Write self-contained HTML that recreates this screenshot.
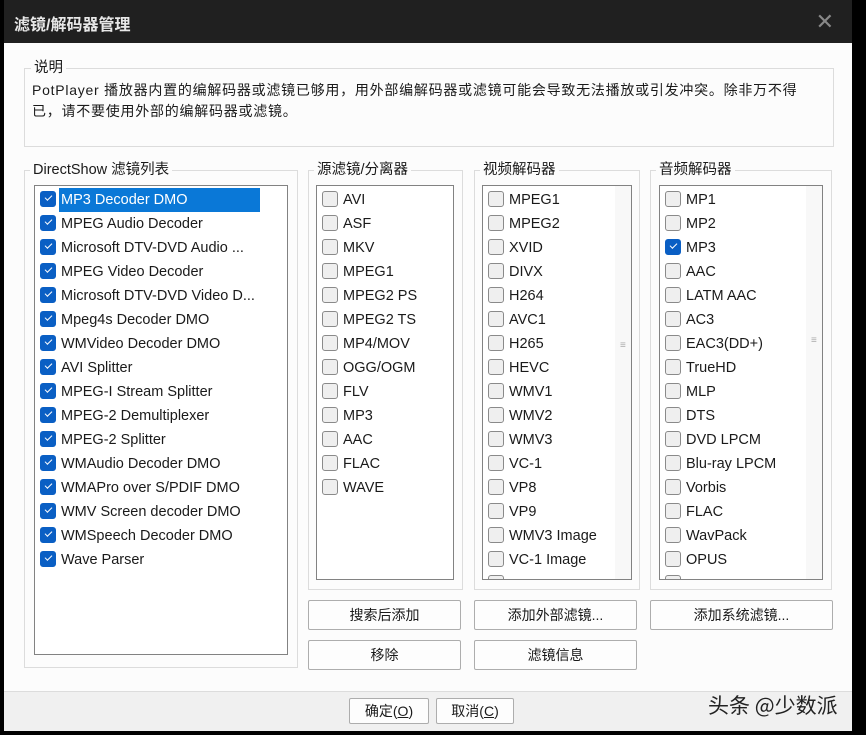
<!DOCTYPE html>
<html><head><meta charset="utf-8"><style>
*{box-sizing:border-box;margin:0;padding:0}
body{width:866px;height:735px;background:#000;position:relative;overflow:hidden;font-family:"Liberation Sans","Noto Sans CJK SC",sans-serif;font-size:14.5px;color:#1a1a1a}
.a{position:absolute}
#title{left:4px;top:0;width:848px;height:43px;background:#202020;color:#e8e8e8;font-size:16px;font-weight:bold;padding:11px 0 0 10px}
#x{right:18px;top:9px;color:#888;font-size:22px;font-weight:normal;position:absolute}
#body{left:4px;top:43px;width:848px;height:648px;background:#fcfcfc}
#foot{left:4px;top:691px;width:848px;height:40px;background:#f0f0f0;border-top:1px solid #dcdcdc}
.grp{border:1px solid #dcdcdc}
.lg{background:#fcfcfc;padding:0 3px;line-height:16px}
.lb{background:#fff;border:1px solid #828282;overflow:hidden}
.row{position:absolute;left:5px;height:24px;line-height:24px;white-space:nowrap}
.cb{display:inline-block;width:16px;height:16px;border:1px solid #8a8a8a;border-radius:3px;background:#efefef;vertical-align:middle;margin-top:-3px;margin-right:5px}
.ck{background:#0a5fc4;border-color:#0a5fc4;position:relative}
.ck:after{content:"";position:absolute;left:4px;top:3px;width:6px;height:3px;border-left:1.5px solid #fff;border-bottom:1.5px solid #fff;transform:rotate(-45deg)}
.sel{background:#0a78d7;color:#fff;padding:0 2px;margin-left:-2px;display:inline-block;width:201px}
.btn{background:#fdfdfd;border:1px solid #adadad;text-align:center;font-size:14px;border-radius:2px}
.sb{position:absolute;right:0;top:0;width:16px;height:100%;background:#f8f8f8}
</style></head><body>
<div id="title" class="a">滤镜/解码器管理<span id="x">✕</span></div>
<div id="body" class="a"></div>
<div id="foot" class="a"></div>

<div class="a grp" style="left:24px;top:68px;width:810px;height:79px"></div>
<div class="a lg" style="left:31px;top:60px">说明</div>
<div class="a" style="left:32px;top:80px;width:800px;line-height:21px;font-size:14px;white-space:nowrap;letter-spacing:0.75px">PotPlayer 播放器内置的编解码器或滤镜已够用，用外部编解码器或滤镜可能会导致无法播放或引发冲突。除非万不得<br>已，请不要使用外部的编解码器或滤镜。</div>

<div class="a grp" style="left:24px;top:170px;width:274px;height:498px"></div>
<div class="a lg" style="left:30px;top:162px">DirectShow 滤镜列表</div>
<div class="a lb" style="left:34px;top:185px;width:254px;height:470px">
<div class="row" style="top:2px"><span class="cb ck"></span><span class="sel">MP3 Decoder DMO</span></div>
<div class="row" style="top:26px"><span class="cb ck"></span>MPEG Audio Decoder</div>
<div class="row" style="top:50px"><span class="cb ck"></span>Microsoft DTV-DVD Audio ...</div>
<div class="row" style="top:74px"><span class="cb ck"></span>MPEG Video Decoder</div>
<div class="row" style="top:98px"><span class="cb ck"></span>Microsoft DTV-DVD Video D...</div>
<div class="row" style="top:122px"><span class="cb ck"></span>Mpeg4s Decoder DMO</div>
<div class="row" style="top:146px"><span class="cb ck"></span>WMVideo Decoder DMO</div>
<div class="row" style="top:170px"><span class="cb ck"></span>AVI Splitter</div>
<div class="row" style="top:194px"><span class="cb ck"></span>MPEG-I Stream Splitter</div>
<div class="row" style="top:218px"><span class="cb ck"></span>MPEG-2 Demultiplexer</div>
<div class="row" style="top:242px"><span class="cb ck"></span>MPEG-2 Splitter</div>
<div class="row" style="top:266px"><span class="cb ck"></span>WMAudio Decoder DMO</div>
<div class="row" style="top:290px"><span class="cb ck"></span>WMAPro over S/PDIF DMO</div>
<div class="row" style="top:314px"><span class="cb ck"></span>WMV Screen decoder DMO</div>
<div class="row" style="top:338px"><span class="cb ck"></span>WMSpeech Decoder DMO</div>
<div class="row" style="top:362px"><span class="cb ck"></span>Wave Parser</div>
</div>

<div class="a grp" style="left:308px;top:170px;width:155px;height:420px"></div>
<div class="a lg" style="left:314px;top:162px">源滤镜/分离器</div>
<div class="a lb" style="left:316px;top:185px;width:138px;height:395px">
<div class="row" style="top:2px"><span class="cb"></span>AVI</div>
<div class="row" style="top:26px"><span class="cb"></span>ASF</div>
<div class="row" style="top:50px"><span class="cb"></span>MKV</div>
<div class="row" style="top:74px"><span class="cb"></span>MPEG1</div>
<div class="row" style="top:98px"><span class="cb"></span>MPEG2 PS</div>
<div class="row" style="top:122px"><span class="cb"></span>MPEG2 TS</div>
<div class="row" style="top:146px"><span class="cb"></span>MP4/MOV</div>
<div class="row" style="top:170px"><span class="cb"></span>OGG/OGM</div>
<div class="row" style="top:194px"><span class="cb"></span>FLV</div>
<div class="row" style="top:218px"><span class="cb"></span>MP3</div>
<div class="row" style="top:242px"><span class="cb"></span>AAC</div>
<div class="row" style="top:266px"><span class="cb"></span>FLAC</div>
<div class="row" style="top:290px"><span class="cb"></span>WAVE</div>
</div>

<div class="a grp" style="left:474px;top:170px;width:166px;height:420px"></div>
<div class="a lg" style="left:480px;top:162px">视频解码器</div>
<div class="a lb" style="left:482px;top:185px;width:150px;height:395px">
<div class="row" style="top:2px"><span class="cb"></span>MPEG1</div>
<div class="row" style="top:26px"><span class="cb"></span>MPEG2</div>
<div class="row" style="top:50px"><span class="cb"></span>XVID</div>
<div class="row" style="top:74px"><span class="cb"></span>DIVX</div>
<div class="row" style="top:98px"><span class="cb"></span>H264</div>
<div class="row" style="top:122px"><span class="cb"></span>AVC1</div>
<div class="row" style="top:146px"><span class="cb"></span>H265</div>
<div class="row" style="top:170px"><span class="cb"></span>HEVC</div>
<div class="row" style="top:194px"><span class="cb"></span>WMV1</div>
<div class="row" style="top:218px"><span class="cb"></span>WMV2</div>
<div class="row" style="top:242px"><span class="cb"></span>WMV3</div>
<div class="row" style="top:266px"><span class="cb"></span>VC-1</div>
<div class="row" style="top:290px"><span class="cb"></span>VP8</div>
<div class="row" style="top:314px"><span class="cb"></span>VP9</div>
<div class="row" style="top:338px"><span class="cb"></span>WMV3 Image</div>
<div class="row" style="top:362px"><span class="cb"></span>VC-1 Image</div>
<div class="row" style="top:386px"><span class="cb"></span></div>
<div class="sb"><div style="position:absolute;left:5px;top:155px;color:#aaa;font-size:10px;line-height:10px">≡</div></div>
</div>

<div class="a grp" style="left:650px;top:170px;width:182px;height:420px"></div>
<div class="a lg" style="left:656px;top:162px">音频解码器</div>
<div class="a lb" style="left:659px;top:185px;width:164px;height:395px">
<div class="row" style="top:2px"><span class="cb"></span>MP1</div>
<div class="row" style="top:26px"><span class="cb"></span>MP2</div>
<div class="row" style="top:50px"><span class="cb ck"></span>MP3</div>
<div class="row" style="top:74px"><span class="cb"></span>AAC</div>
<div class="row" style="top:98px"><span class="cb"></span>LATM AAC</div>
<div class="row" style="top:122px"><span class="cb"></span>AC3</div>
<div class="row" style="top:146px"><span class="cb"></span>EAC3(DD+)</div>
<div class="row" style="top:170px"><span class="cb"></span>TrueHD</div>
<div class="row" style="top:194px"><span class="cb"></span>MLP</div>
<div class="row" style="top:218px"><span class="cb"></span>DTS</div>
<div class="row" style="top:242px"><span class="cb"></span>DVD LPCM</div>
<div class="row" style="top:266px"><span class="cb"></span>Blu-ray LPCM</div>
<div class="row" style="top:290px"><span class="cb"></span>Vorbis</div>
<div class="row" style="top:314px"><span class="cb"></span>FLAC</div>
<div class="row" style="top:338px"><span class="cb"></span>WavPack</div>
<div class="row" style="top:362px"><span class="cb"></span>OPUS</div>
<div class="row" style="top:386px"><span class="cb"></span></div>
<div class="sb"><div style="position:absolute;left:5px;top:150px;color:#aaa;font-size:10px;line-height:10px">≡</div></div>
</div>

<div class="a btn" style="left:308px;top:600px;width:153px;height:30px;line-height:28px">搜索后添加</div>
<div class="a btn" style="left:474px;top:600px;width:163px;height:30px;line-height:28px">添加外部滤镜...</div>
<div class="a btn" style="left:650px;top:600px;width:183px;height:30px;line-height:28px">添加系统滤镜...</div>
<div class="a btn" style="left:308px;top:640px;width:153px;height:30px;line-height:28px">移除</div>
<div class="a btn" style="left:474px;top:640px;width:163px;height:30px;line-height:28px">滤镜信息</div>
<div class="a btn" style="left:349px;top:698px;width:80px;height:26px;line-height:24px">确定(<u>O</u>)</div>
<div class="a btn" style="left:436px;top:698px;width:78px;height:26px;line-height:24px">取消(<u>C</u>)</div>
<div class="a" style="left:708px;top:690px;font-size:21px;color:#222;font-family:'Noto Sans CJK SC',sans-serif">头条 @少数派</div>
</body></html>
